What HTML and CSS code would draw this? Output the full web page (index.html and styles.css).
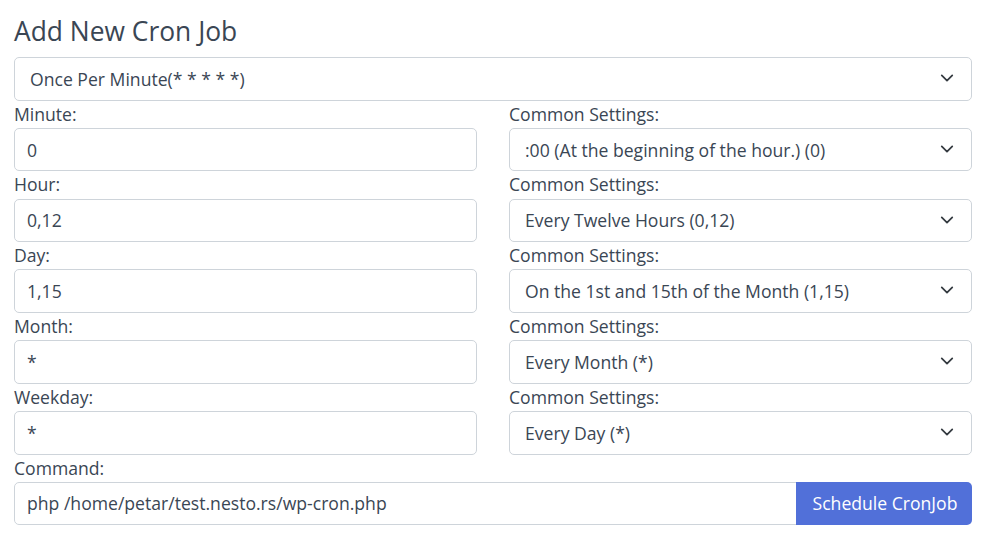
FILE: index.html
```html
<!DOCTYPE html>
<html lang="en">
<head>
<meta charset="utf-8">
<title>Add New Cron Job</title>
<link rel="stylesheet" href="styles.css">
</head>
<body>
<div class="page">
  <h1 class="title">Add New Cron Job</h1>
  <div class="select-wrap">
    <select class="control select"><option>Once Per Minute(* * * * *)</option></select>
    <svg class="chev" viewBox="0 0 16 16" width="16" height="16"><path d="M2 5l6 6 6-6" fill="none" stroke="#343a40" stroke-width="2" stroke-linecap="round" stroke-linejoin="round"/></svg>
  </div>
  <div class="grid">
    <div class="field"><label class="label">Minute:</label><input class="control input" value="0"></div>
    <div class="field"><label class="label">Common Settings:</label>
      <div class="select-wrap"><select class="control select"><option>:00 (At the beginning of the hour.) (0)</option></select>
      <svg class="chev" viewBox="0 0 16 16" width="16" height="16"><path d="M2 5l6 6 6-6" fill="none" stroke="#343a40" stroke-width="2" stroke-linecap="round" stroke-linejoin="round"/></svg></div></div>

    <div class="field"><label class="label">Hour:</label><input class="control input" value="0,12"></div>
    <div class="field"><label class="label">Common Settings:</label>
      <div class="select-wrap"><select class="control select"><option>Every Twelve Hours (0,12)</option></select>
      <svg class="chev" viewBox="0 0 16 16" width="16" height="16"><path d="M2 5l6 6 6-6" fill="none" stroke="#343a40" stroke-width="2" stroke-linecap="round" stroke-linejoin="round"/></svg></div></div>

    <div class="field"><label class="label">Day:</label><input class="control input" value="1,15"></div>
    <div class="field"><label class="label">Common Settings:</label>
      <div class="select-wrap"><select class="control select"><option>On the 1st and 15th of the Month (1,15)</option></select>
      <svg class="chev" viewBox="0 0 16 16" width="16" height="16"><path d="M2 5l6 6 6-6" fill="none" stroke="#343a40" stroke-width="2" stroke-linecap="round" stroke-linejoin="round"/></svg></div></div>

    <div class="field"><label class="label">Month:</label><input class="control input" value="*"></div>
    <div class="field"><label class="label">Common Settings:</label>
      <div class="select-wrap"><select class="control select"><option>Every Month (*)</option></select>
      <svg class="chev" viewBox="0 0 16 16" width="16" height="16"><path d="M2 5l6 6 6-6" fill="none" stroke="#343a40" stroke-width="2" stroke-linecap="round" stroke-linejoin="round"/></svg></div></div>

    <div class="field"><label class="label">Weekday:</label><input class="control input" value="*"></div>
    <div class="field"><label class="label">Common Settings:</label>
      <div class="select-wrap"><select class="control select"><option>Every Day (*)</option></select>
      <svg class="chev" viewBox="0 0 16 16" width="16" height="16"><path d="M2 5l6 6 6-6" fill="none" stroke="#343a40" stroke-width="2" stroke-linecap="round" stroke-linejoin="round"/></svg></div></div>
  </div>
  <div class="field">
    <label class="label">Command:</label>
    <div class="input-group">
      <input class="control input grow" value="php /home/petar/test.nesto.rs/wp-cron.php">
      <button class="btn">Schedule CronJob</button>
    </div>
  </div>
</div>
</body>
</html>
```
FILE: styles.css
```css
* { box-sizing: border-box; }
body {
  margin: 0;
  background: #fff;
  font-family: "Open Sans", "Noto Sans", sans-serif;
  color: #3a4654;
}
.page {
  padding: 15px 14px 0 14px;
}
.title {
  margin: 0 0 9px 0;
  font-size: 26.4px;
  font-weight: 400;
  line-height: 33px;
  color: #3a4654;
}
.grid {
  display: grid;
  grid-template-columns: 1fr 1fr;
  column-gap: 32px;
}
.field {
  display: flex;
  flex-direction: column;
}
.label {
  font-size: 17.6px;
  line-height: 26px;
  padding-top: 0;
  height: 27.2px;
  color: #3a4654;
}
.control {
  display: block;
  width: 100%;
  height: 43.6px;
  font-family: inherit;
  font-size: 17.6px;
  color: #3a4654;
  background: #fff;
  border: 1px solid #ced4da;
  border-radius: 5px;
  outline: none;
  margin: 0;
}
.input {
  padding: 0 12px;
}
.select-wrap {
  position: relative;
}
.select {
  appearance: none;
  -webkit-appearance: none;
  padding: 0 40px 0 15px;
}
.chev {
  position: absolute;
  right: 18px;
  top: 14px;
  width: 14px;
  height: 14px;
  pointer-events: none;
}
.input-group {
  display: flex;
}
.grow {
  flex: 1;
  border-radius: 5px 0 0 5px;
}
.btn {
  flex: none;
  width: 176px;
  height: 43.6px;
  border: none;
  border-radius: 0 5px 5px 0;
  background: #5170d9;
  color: #fff;
  font-family: inherit;
  font-size: 17.6px;
  padding: 0 0 0 2px;
  margin-left: -1px;
}
```
